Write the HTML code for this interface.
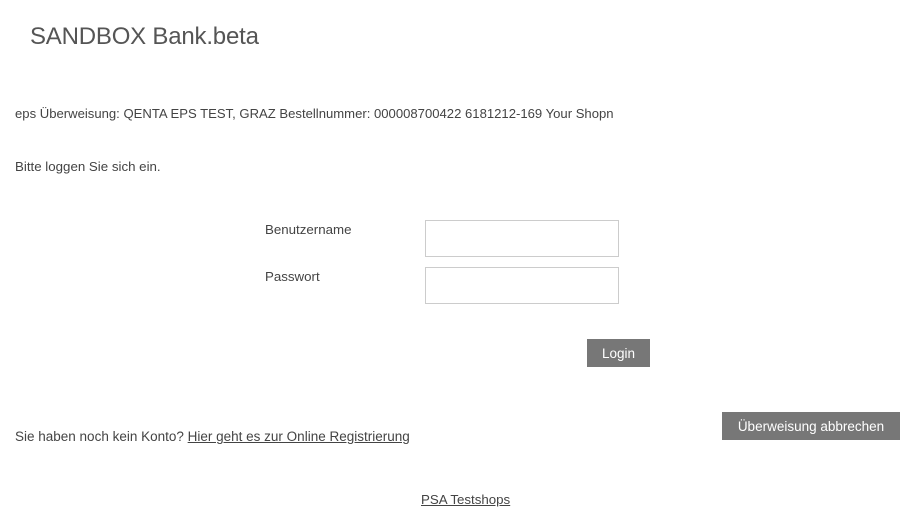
<!DOCTYPE html>
<html><head><meta charset="utf-8"><style>
body{margin:0;width:921px;height:523px;background:#fff;font-family:"Liberation Sans",sans-serif;color:#444;font-size:13px;position:relative;overflow:hidden}
.a{position:absolute;white-space:nowrap}
.t{left:30px;top:23px;font-size:24px;color:#555;font-weight:300;letter-spacing:-0.2px}
.in{position:absolute;left:425px;width:192px;height:35px;border:1px solid #ccc;background:#fff}
.btn{position:absolute;background:#777;color:#fff;font-size:13.5px;text-align:center}
a{color:#444;text-decoration:underline}
</style></head><body>
<div class="a t">SANDBOX Bank.beta</div>
<div class="a" style="left:15px;top:106px;font-size:13.1px">eps Überweisung: QENTA EPS TEST, GRAZ Bestellnummer: 000008700422 6181212-169 Your Shopn</div>
<div class="a" style="left:15px;top:159px;font-size:13.3px">Bitte loggen Sie sich ein.</div>
<div class="a" style="left:265px;top:222px;font-size:13.3px">Benutzername</div>
<div class="in" style="top:220px"></div>
<div class="a" style="left:265px;top:269px;font-size:13.3px">Passwort</div>
<div class="in" style="top:267px"></div>
<div class="btn" style="left:587px;top:339px;width:63px;height:28px;line-height:29px">Login</div>
<div class="a" style="left:15px;top:429px;font-size:13.5px">Sie haben noch kein Konto? <a>Hier geht es zur Online Registrierung</a></div>
<div class="btn" style="left:722px;top:412px;width:178px;height:28px;line-height:29px">Überweisung abbrechen</div>
<div class="a" style="left:421px;top:492px;font-size:13.3px"><a>PSA Testshops</a></div>
</body></html>
